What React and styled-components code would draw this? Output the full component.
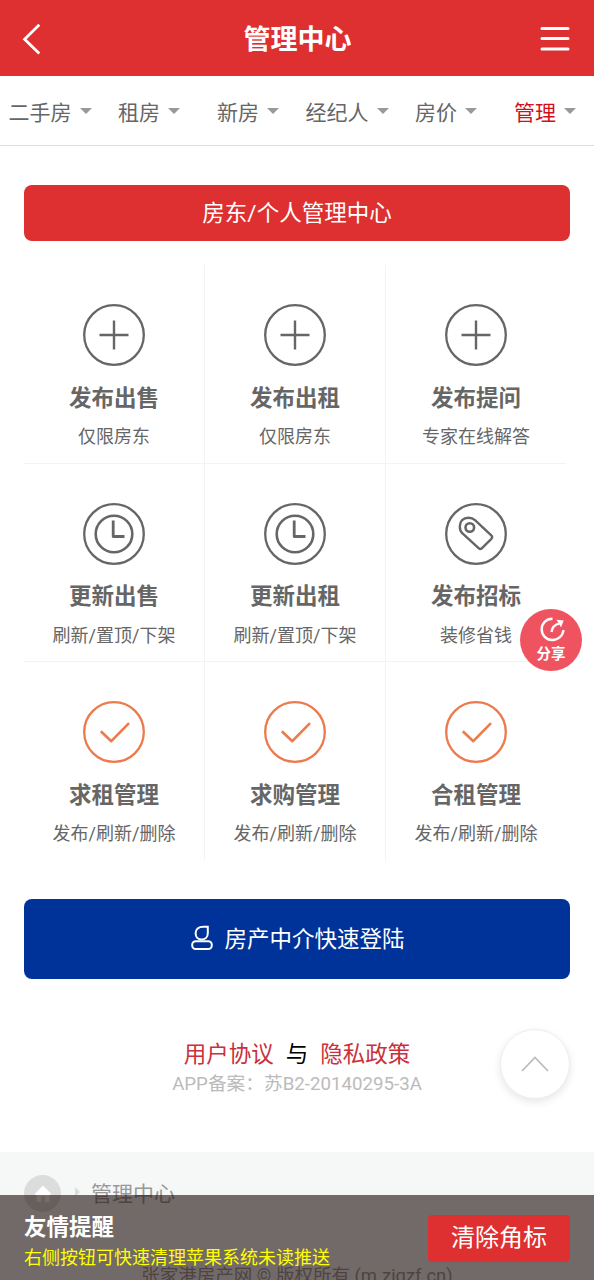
import React from "react";
import styled, { createGlobalStyle } from "styled-components";

const GlobalStyle = createGlobalStyle`
  * { box-sizing: border-box; }
  body {
    margin: 0;
    background: #fff;
    font-family: Roboto, "Noto Sans CJK SC", sans-serif;
    color: #666;
  }
`;

const Screen = styled.div`
  position: relative;
  display: flex;
  flex-direction: column;
  width: 594px;
  height: 1280px;
  overflow: hidden;
  background: #fff;
`;

const Header = styled.header`
  flex: none;
  display: flex;
  align-items: center;
  justify-content: space-between;
  height: 76px;
  padding: 0 23px 0 22px;
  background: #de3031;
  color: #fff;
`;

const Title = styled.h1`
  margin: 0;
  padding: 3px 0 0 2px;
  font-size: 27px;
  line-height: 40px;
  font-weight: 700;
`;

const IconButton = styled.button`
  display: flex;
  align-items: center;
  justify-content: ${(p) => p.$align};
  width: 40px;
  height: 40px;
  padding: 2px 0 0;
  border: 0;
  background: none;
  color: #fff;
`;

const Nav = styled.nav`
  flex: none;
  display: grid;
  grid-template-columns: repeat(6, 1fr);
  height: 70px;
  border-bottom: 1px solid #dcdcdc;
`;

const NavItem = styled.a`
  display: flex;
  align-items: center;
  justify-content: center;
  gap: 8px;
  padding: 5px 0 0 1px;
  font-size: 21px;
  line-height: 30px;
  white-space: nowrap;
  color: ${(p) => (p.$active ? "#d20f1b" : "#666")};
`;

const Caret = styled.span`
  border: 6px solid transparent;
  border-top-color: #999;
  border-bottom: 0;
  margin-bottom: 4px;
`;

const Main = styled.main`
  flex: none;
  display: flex;
  flex-direction: column;
  height: 1006px;
  padding: 39px 24px 0;
`;

const SectionHeading = styled.h2`
  flex: none;
  display: flex;
  align-items: center;
  justify-content: center;
  height: 56px;
  margin: 0 0 24px;
  padding-bottom: 4px;
  border-radius: 8px;
  background: #de3031;
  color: #fff;
  font-size: 22.5px;
  font-weight: 400;
`;

const Grid = styled.div`
  display: grid;
  grid-template-columns: repeat(3, 181px);
  grid-auto-rows: 198.5px;
`;

const Cell = styled.a`
  display: flex;
  flex-direction: column;
  align-items: center;
  padding-top: 39px;
  border-right: 1px solid ${(p) => (p.$lastCol ? "transparent" : "#f3f3f3")};
  border-bottom: 1px solid ${(p) => (p.$lastRow ? "transparent" : "#f3f3f3")};
`;

const CellTitle = styled.strong`
  margin-top: 15.5px;
  font-size: 22.5px;
  line-height: 32px;
  font-weight: 700;
`;

const CellNote = styled.span`
  margin-top: 9.5px;
  font-size: 18px;
  line-height: 28px;
`;

const LoginButton = styled.a`
  flex: none;
  display: flex;
  align-items: center;
  justify-content: center;
  gap: 11px;
  height: 80px;
  margin-top: 38px;
  padding: 0 0 3px 2px;
  border-radius: 8px;
  background: #003399;
  color: #fff;
  font-size: 22.5px;

  svg {
    margin-top: 1px;
  }
`;

const Terms = styled.p`
  display: flex;
  justify-content: center;
  gap: 12px;
  margin: 58px 0 0;
  font-size: 22.5px;
  line-height: 34px;
  color: #000;
`;

const TermsLink = styled.a`
  color: #c9303a;
`;

const Filing = styled.p`
  margin: 0;
  text-align: center;
  font-size: 18.7px;
  line-height: 27px;
  color: #bbb;
`;

const Footer = styled.footer`
  flex: none;
  height: 160px;
  padding: 23px 24px 0;
  background: #f6f7f7;
  color: #999;
`;

const Breadcrumb = styled.div`
  display: flex;
  align-items: center;
  height: 37px;
  font-size: 21px;
  line-height: 30px;
`;

const HomeBadge = styled.span`
  display: flex;
  align-items: center;
  justify-content: center;
  width: 37px;
  height: 37px;
  border-radius: 50%;
  background: #dcdcdc;
`;

const Chevron = styled.span`
  margin: 0 11px 3px 14px;
  border: 5px solid transparent;
  border-left-color: #dcdcdc;
  border-right: 0;
`;

const Copyright = styled.p`
  margin: 51px 0 0;
  text-align: center;
  font-size: 18.5px;
  line-height: 26px;
`;

const ShareButton = styled.button`
  position: absolute;
  right: 12px;
  top: 609px;
  display: flex;
  flex-direction: column;
  align-items: center;
  width: 62px;
  height: 62px;
  padding: 7px 0 0;
  border: 0;
  border-radius: 50%;
  background: #f05360;
  color: #fff;
  font: 700 14.5px/20px Roboto, "Noto Sans CJK SC", sans-serif;

  svg {
    margin: 0 0 2px 4px;
  }
`;

const TopButton = styled.button`
  position: absolute;
  right: 24px;
  top: 1029px;
  display: flex;
  align-items: center;
  justify-content: center;
  width: 70px;
  height: 70px;
  padding: 0;
  border: 1px solid #eee;
  border-radius: 50%;
  background: #fff;
  box-shadow: 0 3px 8px rgba(0, 0, 0, 0.1);
`;

const Notice = styled.aside`
  position: absolute;
  left: 0;
  right: 0;
  bottom: 0;
  display: flex;
  justify-content: space-between;
  height: 85px;
  padding: 14px 24px 0;
  background: rgba(26, 12, 8, 0.6);
`;

const NoticeText = styled.div`
  display: flex;
  flex-direction: column;
  padding-top: 1px;
  font-size: 18px;
  line-height: 28px;
  color: #ff0;
`;

const NoticeTitle = styled.strong`
  font-size: 22.5px;
  line-height: 34px;
  color: #fff;
`;

const ClearButton = styled.button`
  width: 142px;
  height: 47px;
  margin-top: 6px;
  padding: 0 0 1px;
  border: 0;
  border-radius: 4px;
  background: #de3031;
  color: #fff;
  font: 400 24px/34px Roboto, "Noto Sans CJK SC", sans-serif;
`;

const glyphs = {
  plus: <path d="M31 16.5v29M16.5 31h29" strokeWidth="2.4" />,
  clock: (
    <>
      <circle cx="31" cy="31" r="18.3" strokeWidth="2.6" />
      <path d="M30.2 17.5V33.5H41.5" strokeWidth="2.8" />
    </>
  ),
  tag: (
    <>
      <path
        d="M17.200 30.200C15.200 28.200 14.800 26 14.800 23.500c0-5.400 3.300-8.700 8.700-8.700 2.600 0 4.500.5 6.500 2.400L46.300 32.400c1.200 1.200 1.200 2.200.1 3.400L37 45.200c-1.200 1.200-2.200 1.200-3.400 0Z"
        strokeWidth="2.4"
      />
      <circle cx="24.800" cy="24.500" r="4.300" strokeWidth="2.600" />
    </>
  ),
  check: <path d="M17.800 30.300l10.500 9.900 17.700-18" strokeWidth="2.600" />,
};

function CircleIcon({ name }) {
  return (
    <svg
      width="62"
      height="62"
      viewBox="0 0 62 62"
      fill="none"
      stroke={name === "check" ? "#ec7a4b" : "#666"}
      strokeLinejoin="round"
    >
      <circle cx="31" cy="31" r="29.8" strokeWidth="2.3" />
      {glyphs[name]}
    </svg>
  );
}

const navItems = ["二手房", "租房", "新房", "经纪人", "房价", "管理"];

const cells = [
  ["plus", "发布出售", "仅限房东"],
  ["plus", "发布出租", "仅限房东"],
  ["plus", "发布提问", "专家在线解答"],
  ["clock", "更新出售", "刷新/置顶/下架"],
  ["clock", "更新出租", "刷新/置顶/下架"],
  ["tag", "发布招标", "装修省钱"],
  ["check", "求租管理", "发布/刷新/删除"],
  ["check", "求购管理", "发布/刷新/删除"],
  ["check", "合租管理", "发布/刷新/删除"],
];

export default function App() {
  return (
    <Screen>
      <GlobalStyle />
      <Header>
        <IconButton $align="flex-start">
          <svg width="20" height="32" viewBox="0 0 20 32" fill="none" stroke="currentColor" strokeWidth="2.8">
            <path d="M17.3 1.8L2.6 16.2l14.7 14.4" />
          </svg>
        </IconButton>
        <Title>管理中心</Title>
        <IconButton $align="flex-end">
          <svg width="32" height="28" viewBox="0 0 32 28" fill="none" stroke="currentColor" strokeWidth="3" strokeLinecap="round">
            <path d="M3 3.400h26M3 13.600h26M3 24h26" />
          </svg>
        </IconButton>
      </Header>
      <Nav>
        {navItems.map((label) => (
          <NavItem key={label} $active={label === "管理"}>
            {label}
            <Caret />
          </NavItem>
        ))}
      </Nav>
      <Main>
        <SectionHeading>房东/个人管理中心</SectionHeading>
        <Grid>
          {cells.map(([icon, title, note], i) => (
            <Cell key={title} $lastCol={i % 3 === 2} $lastRow={i > 5}>
              <CircleIcon name={icon} />
              <CellTitle>{title}</CellTitle>
              <CellNote>{note}</CellNote>
            </Cell>
          ))}
        </Grid>
        <LoginButton>
          <svg width="22" height="26" viewBox="0 0 22 26" fill="none" stroke="currentColor" strokeWidth="2">
            <path d="M16.800 1.800h-4.500C7.600 1.800 4.600 4.300 4.600 8.300c0 3.700 2.400 6.200 6 6.200s6.200-2.500 6.200-6.200z" />
            <rect x="1.200" y="16.200" width="19.600" height="7.800" rx="3.500" />
          </svg>
          房产中介快速登陆
        </LoginButton>
        <Terms>
          <TermsLink>用户协议</TermsLink>
          <span>与</span>
          <TermsLink>隐私政策</TermsLink>
        </Terms>
        <Filing>APP备案：苏B2-20140295-3A</Filing>
      </Main>
      <Footer>
        <Breadcrumb>
          <HomeBadge>
            <svg width="20" height="18" viewBox="0 0 20 18" fill="#fff">
              <path d="M10 0.500L19 9.500H16.500V17H12V11.500H8V17H3.500V9.500H1Z" />
            </svg>
          </HomeBadge>
          <Chevron />
          管理中心
        </Breadcrumb>
        <Copyright>张家港房产网 © 版权所有 (m.zjgzf.cn)</Copyright>
      </Footer>
      <ShareButton>
        <svg width="28" height="27" viewBox="0 0 28 27" fill="none" stroke="#fff" strokeWidth="2.400">
          <path d="M13.500 2.800C7 2.800 2.700 7.400 2.700 13.200c0 6 4.500 10.800 10.600 10.800 5.900 0 10.700-4.200 11.200-10" />
          <path d="M12.500 16c.5-4.600 3.300-7.400 8-8.600" />
          <path d="M17.500 3.800l7.200 0.800-2.700 6.600z" fill="#fff" stroke="none" />
        </svg>
        分享
      </ShareButton>
      <TopButton>
        <svg width="28" height="16" viewBox="0 0 28 16" fill="none" stroke="#bbb" strokeWidth="1.800">
          <path d="M1 15L14 1.500 27 15" />
        </svg>
      </TopButton>
      <Notice>
        <NoticeText>
          <NoticeTitle>友情提醒</NoticeTitle>
          右侧按钮可快速清理苹果系统未读推送
        </NoticeText>
        <ClearButton>清除角标</ClearButton>
      </Notice>
    </Screen>
  );
}
